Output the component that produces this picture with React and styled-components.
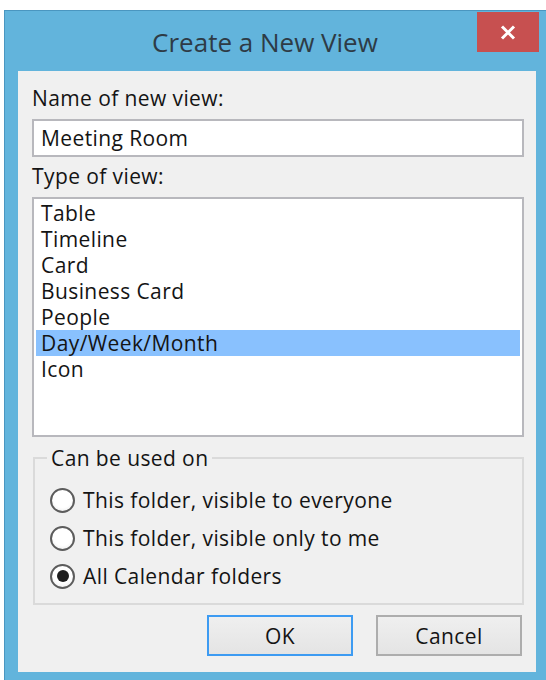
import React, { useState } from "react";
import styled, { createGlobalStyle } from "styled-components";

const GlobalStyle = createGlobalStyle`
  html, body {
    margin: 0;
    padding: 0;
    background: #ffffff;
    overflow: hidden;
  }
  body {
    font-family: "Open Sans", "Noto Sans", sans-serif;
    color: #141414;
  }
`;

// shared text look for the dialog body
const bodyText = `
  font-size: 21px;
  font-weight: 500;
  letter-spacing: 0.4px;
  line-height: 26px;
`;

const Window = styled.div`
  margin: 10px 0 0 4px;
  width: 542px;
  height: 700px;
  box-sizing: border-box;
  background: #62b4dc;
  border-top: 1px solid #4a96c0;
  border-left: 1px solid #4a96c0;
  display: flex;
  flex-direction: column;
`;

const TitleBar = styled.div`
  height: 60px;
  display: flex;
  align-items: flex-start;
`;

const Title = styled.div`
  flex: 1;
  padding: 14px 0 0 48px;
  text-align: center;
  font-size: 26px;
  line-height: 34px;
  color: #2e3b46;
`;

const CloseButton = styled.button`
  width: 62px;
  height: 40px;
  margin: 1px 7px 0 0;
  padding: 0;
  border: none;
  background: #c75050;
  display: flex;
  align-items: center;
  justify-content: center;
  cursor: pointer;
`;

const Client = styled.div`
  margin: 0 10px 0 13px;
  height: 601px;
  box-sizing: border-box;
  background: #f0f0f0;
  padding: 14px 12px 16px 14px;
  display: flex;
  flex-direction: column;
`;

const Label = styled.div`
  ${bodyText}
  margin-bottom: ${(p) => p.$gap}px;
`;

const TextBox = styled.input`
  box-sizing: border-box;
  width: 100%;
  height: 38px;
  margin: 0 0 6px;
  padding: 4px 7px;
  border: 2px solid #b8b8bd;
  background: #ffffff;
  font-family: inherit;
  ${bodyText}
  color: #141414;
  outline: none;
`;

const ListBox = styled.ul`
  box-sizing: border-box;
  height: 240px;
  margin: 0 0 8px;
  padding: 1px 2px;
  list-style: none;
  border: 2px solid #b8b8bd;
  background: #ffffff;
`;

const ListItem = styled.li`
  padding-left: 5px;
  ${bodyText}
  background: ${(p) => (p.$selected ? "#89c1fe" : "transparent")};
  cursor: default;
`;

const GroupBox = styled.fieldset`
  margin: 0 0 10px 1px;
  padding: 10px 0 8px 12px;
  border: 2px solid #dadada;
  min-inline-size: 0;
`;

const Legend = styled.legend`
  padding: 0 4px;
  ${bodyText}
`;

const RadioRow = styled.label`
  height: 38px;
  margin-left: 3px;
  display: flex;
  align-items: center;
  gap: 8px;
  ${bodyText}
  cursor: default;
`;

const RadioCircle = styled.span`
  box-sizing: border-box;
  flex: none;
  width: 25px;
  height: 25px;
  border-radius: 50%;
  border: 2px solid #5c5c5c;
  background: radial-gradient(circle at 50% 40%, #ffffff 55%, #e4e4e4 100%);
  display: flex;
  align-items: center;
  justify-content: center;

  &::after {
    content: "";
    width: 12px;
    height: 12px;
    border-radius: 50%;
    background: #1e1e1e;
    display: ${(p) => (p.$checked ? "block" : "none")};
  }
`;

const ButtonRow = styled.div`
  display: flex;
  justify-content: flex-end;
  gap: 23px;
  padding-right: 2px;
`;

const Button = styled.button`
  box-sizing: border-box;
  width: 146px;
  height: 41px;
  border: 2px solid ${(p) => (p.$primary ? "#3d9bf2" : "#adadad")};
  background: linear-gradient(#efefef, #e4e4e4);
  font-family: inherit;
  ${bodyText}
  color: #141414;
  cursor: pointer;
`;

const viewTypes = [
  "Table",
  "Timeline",
  "Card",
  "Business Card",
  "People",
  "Day/Week/Month",
  "Icon",
];

const scopes = [
  "This folder, visible to everyone",
  "This folder, visible only to me",
  "All Calendar folders",
];

export default function App() {
  const [name, setName] = useState("Meeting Room");
  const [type, setType] = useState("Day/Week/Month");
  const [scope, setScope] = useState(2);

  return (
    <>
      <GlobalStyle />
      <Window>
        <TitleBar>
          <Title>Create a New View</Title>
          <CloseButton aria-label="Close">
            <svg width="16" height="15" viewBox="0 0 16 15">
              <path
                d="M2 1.5 L14 13.5 M14 1.5 L2 13.5"
                stroke="#ffffff"
                strokeWidth="3"
                fill="none"
              />
            </svg>
          </CloseButton>
        </TitleBar>
        <Client>
          <Label $gap={8}>Name of new view:</Label>
          <TextBox value={name} onChange={(e) => setName(e.target.value)} />
          <Label $gap={8}>Type of view:</Label>
          <ListBox>
            {viewTypes.map((t) => (
              <ListItem
                key={t}
                $selected={t === type}
                onClick={() => setType(t)}
              >
                {t}
              </ListItem>
            ))}
          </ListBox>
          <GroupBox>
            <Legend>Can be used on</Legend>
            {scopes.map((s, i) => (
              <RadioRow key={s} onClick={() => setScope(i)}>
                <RadioCircle $checked={scope === i} />
                {s}
              </RadioRow>
            ))}
          </GroupBox>
          <ButtonRow>
            <Button $primary>OK</Button>
            <Button>Cancel</Button>
          </ButtonRow>
        </Client>
      </Window>
    </>
  );
}
